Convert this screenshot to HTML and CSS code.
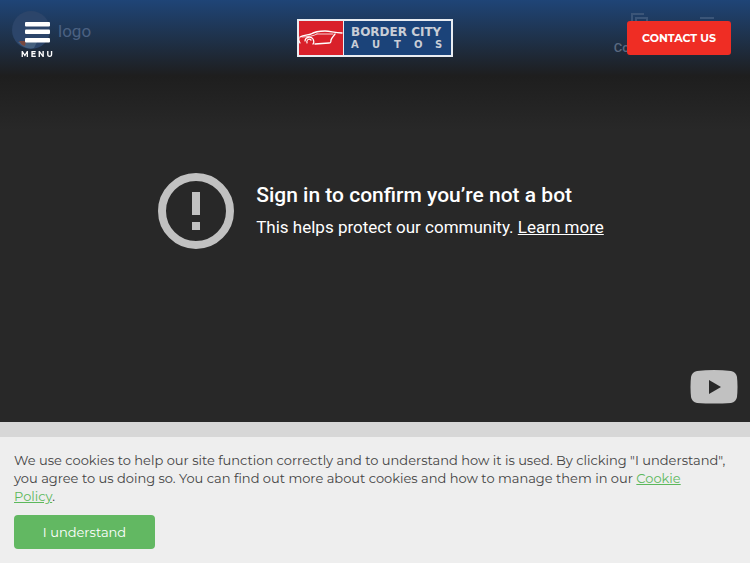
FILE: index.html
```html
<!DOCTYPE html>
<html lang="en">
<head>
<meta charset="UTF-8">
<meta name="viewport" content="width=device-width, initial-scale=1">
<title>Border City Autos</title>
<link rel="stylesheet" href="styles.css">
</head>
<body>

<header class="header">
  <button class="menu" type="button">
    <svg width="26" height="22" viewBox="0 0 26 22" aria-hidden="true">
      <rect y="1" width="25" height="4.5" rx="1"/>
      <rect y="8.5" width="25" height="4.5" rx="1"/>
      <rect y="17" width="25" height="4.5" rx="1"/>
    </svg>
    <span>MENU</span>
  </button>

  <a class="brand" href="#" aria-label="Border City Autos">
    <svg width="156" height="38" viewBox="0 0 156 38">
      <rect width="156" height="38" fill="#e9edf2"/>
      <rect x="2" y="2" width="44" height="34" fill="#d9202a"/>
      <rect x="47" y="2" width="107" height="34" fill="#1b4379"/>
      <!-- car outline -->
      <g fill="none" stroke="#fff" stroke-linecap="round">
        <path d="M3 18C6 16 11 16 14 15C19 12 24 12 28 12C34 12 37 14 45 14" stroke-width="1.4"/>
        <path d="M5 18C10 18 17 17 20 15M20 15L36 15" stroke-width="0.8"/>
        <path d="M2 19C1 21 2 22 3 24M8 22C8 18 14 17 16 20C17 22 17 24 16 25M10 24C9 21 12 19 14 21" stroke-width="1.2"/>
        <path d="M18 25L32 24C34 24 34 23 34 21C35 18 37 17 38 15" stroke-width="1.4"/>
      </g>
      <text class="brand-name" x="54" y="17">BORDER CITY</text>
      <text class="brand-sub" x="54 75 97 117 138" y="29">AUTOS</text>
    </svg>
  </a>

  <a class="contact" href="#">CONTACT US</a>
</header>

<main>
  <section class="video">
    <div class="video-bar">
      <svg width="40" height="40" viewBox="0 0 40 40" aria-hidden="true">
        <circle cx="19" cy="19" r="19" fill="#2c456a"/>
        <path d="M6 31L25 31L22 37Q13 39 6 31Z" fill="#46617f"/>
        <path d="M7 30h7l-1 5-3-1z" fill="#78483f"/>
      </svg>
      <span class="video-title">logo</span>
      <div class="video-action">
        <svg width="24" height="24" viewBox="0 0 24 24" aria-hidden="true">
          <path d="M5 17H4V3H16M8 7H19V21H8Z"/>
        </svg>
        <span>Copy link</span>
      </div>
      <svg class="video-more" width="20" height="24" viewBox="0 0 20 24" aria-hidden="true">
        <path d="M3 7H17"/>
      </svg>
    </div>

    <div class="notice">
      <svg width="76" height="76" viewBox="0 0 76 76" aria-hidden="true">
        <circle cx="38" cy="38" r="34" fill="none" stroke="#c1c1c1" stroke-width="8"/>
        <path d="M34 19h8v23h-8zM34 49h8v8h-8z" fill="#c1c1c1"/>
      </svg>
      <div class="notice-text">
        <h1>Sign in to confirm you’re not a bot</h1>
        <p>This helps protect our community. <a href="#">Learn more</a></p>
      </div>
    </div>

    <a class="youtube" href="#" aria-label="Watch on YouTube">
      <svg width="48" height="34" viewBox="0 0 48 34">
        <path d="M7 1Q24-1 41 1Q46 2 47 7Q48 17 47 27Q46 32 41 33Q24 34 7 33Q2 32 1 27Q0 17 1 7Q2 2 7 1Z" fill="#c1c1c1"/>
        <path d="M19 10L31 17L19 24Z" fill="#282828"/>
      </svg>
    </a>
  </section>
</main>

<div class="cookies">
  <p>We use cookies to help our site function correctly and to understand how it is used. By clicking "I understand", you agree to us doing so. You can find out more about cookies and how to manage them in our <a href="#">Cookie<br>Policy</a>.</p>
  <button type="button">I understand</button>
</div>

</body>
</html>
```
FILE: styles.css
```css
* { box-sizing: border-box; }

body {
  margin: 0;
  background: #d7d7d7;
  color: #444;
  font-family: Montserrat, Inter, sans-serif;
}

/* header */
.header {
  position: fixed;
  top: 0;
  left: 0;
  right: 0;
  z-index: 2;
  display: grid;
  grid-template-columns: 1fr auto 1fr;
  align-items: center;
  height: 76px;
  padding: 0 19px;
}
.menu {
  justify-self: start;
  display: flex;
  flex-direction: column;
  align-items: center;
  gap: 6px;
  padding: 3px 0 0 2px;
  border: 0;
  background: none;
  color: #fff;
  font: 700 8px/10px Montserrat, Inter, sans-serif;
  letter-spacing: 2px;
}
.menu svg { fill: #fff; }
.brand svg { display: block; }
.brand-name,
.brand-sub {
  fill: #c9ced6;
  font: 700 12px "DejaVu Sans", sans-serif;
}
.brand-sub { font-size: 10px; }
.contact {
  justify-self: end;
  width: 104px;
  border-radius: 3px;
  background: #ef2d24;
  color: #fff;
  font-size: 11px;
  font-weight: 700;
  line-height: 34px;
  text-align: center;
  text-decoration: none;
}

/* video */
.video {
  position: relative;
  display: flex;
  align-items: center;
  justify-content: center;
  aspect-ratio: 16 / 9;
  background: linear-gradient(#1f4577, #1e1e1e 76px, #282828 130px);
  font-family: Roboto, sans-serif;
}
.video-bar {
  position: absolute;
  top: 0;
  left: 0;
  right: 0;
  display: flex;
  align-items: flex-start;
  padding: 11px 33px 0 12px;
  color: #4b6182;
}
.video-title {
  flex: 1;
  padding-left: 6px;
  font-size: 17px;
  line-height: 40px;
}
.video-action {
  display: flex;
  flex-direction: column;
  align-items: center;
  gap: 4px;
  margin-right: 30px;
  color: #5a6980;
  font-size: 13px;
  font-weight: 500;
  line-height: 18px;
}
.video-action svg,
.video-more {
  fill: none;
  stroke: #3b5578;
  stroke-width: 2;
}
.notice {
  display: flex;
  align-items: center;
  gap: 22px;
  padding-left: 12px;
  color: #fff;
}
.notice-text { padding-bottom: 2px; }
.notice h1 {
  margin: 0 0 8px;
  font-size: 21px;
  font-weight: 500;
  line-height: 26px;
}
.notice p {
  margin: 0;
  font-size: 17px;
  line-height: 22px;
}
.notice a { color: inherit; }
.youtube {
  position: absolute;
  right: 12px;
  bottom: 18px;
}
.youtube svg { display: block; }

/* cookie bar */
.cookies {
  position: fixed;
  left: 0;
  right: 0;
  bottom: 0;
  z-index: 3;
  padding: 14px;
  background: #eee;
}
.cookies p {
  margin: 0 0 10px;
  font-size: 13px;
  line-height: 18px;
}
.cookies a { color: #5cb85c; }
.cookies button {
  display: block;
  width: 141px;
  height: 34px;
  border: 0;
  border-radius: 4px;
  background: #62b862;
  color: #fff;
  font: 13px Montserrat, Inter, sans-serif;
}
```
